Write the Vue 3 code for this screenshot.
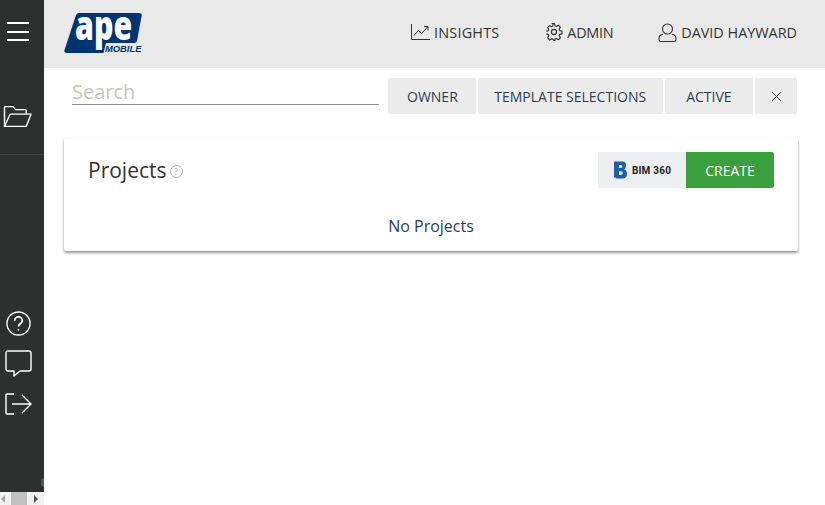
<script setup>
const filters = ["OWNER", "TEMPLATE SELECTIONS", "ACTIVE"];
</script>

<template>
  <div class="app">
    <aside class="rail">
      <div class="sidebar">
        <button class="burger" aria-label="Menu"><span></span><span></span><span></span></button>
        <div class="folder-row">
          <svg width="30" height="21" viewBox="3 2 29 21" fill="none" stroke="#fff" stroke-width="1.4" stroke-linejoin="round">
            <path d="M4 20.5V3.6q0-1 1-1h7.5l2.6 3h9.6q1 0 1 1v3" />
            <path d="M4 22.5 9.2 11q.4-.9 1.4-.9h20l-4.6 11.6q-.3.8-1.2.8H5q-1 0-1-1z" />
          </svg>
        </div>
        <div class="bottom-icons">
          <svg class="help" width="26" height="26" viewBox="0 0 26 26" fill="none" stroke="#fff" stroke-width="1.4">
            <circle cx="13" cy="13" r="12" />
            <path d="M9 10.2a4 4 0 0 1 8 0c0 2.7-4 3-4 6" stroke-width="1.8" />
            <circle cx="13" cy="19.5" r="1" fill="#fff" stroke="none" />
          </svg>
          <svg width="27" height="27" viewBox="0 0 27 27" fill="none" stroke="#fff" stroke-width="1.4" stroke-linejoin="round">
            <path d="M3 1h21q2 0 2 2v16q0 2-2 2H15l-6 5v-5H3q-2 0-2-2V3q0-2 2-2z" />
          </svg>
          <svg class="exit" width="27" height="22" viewBox="0 0 27 22" fill="none" stroke="#fff" stroke-width="1.4" stroke-linejoin="round">
            <path d="M9 1H2q-1 0-1 1v18q0 1 1 1h7" />
            <path d="M7 11h19M17 2l9 9-9 9" />
          </svg>
        </div>
        <span class="stray"></span>
      </div>
      <div class="scrollbar">
        <i class="arrow left"></i>
        <i class="thumb"></i>
        <i class="arrow right"></i>
      </div>
    </aside>

    <div class="main">
      <header class="topbar">
        <svg class="logo" width="78" height="40" viewBox="0 0 78 40">
          <path fill="#003473" d="M15.500 0H75q3.500 0 2.500 3.500L73 28q-.5 2-2.500 2H42L39.500 40H3q-3.500 0-2.500-3L12 2q.8-2 3.500-2z" />
          <text class="logo-ape" transform="translate(11 27) scale(.74 1)">ape</text>
          <text class="logo-mobile" x="41" y="39">MOBILE</text>
        </svg>
        <nav class="nav">
          <a class="nav-link insights">
            <svg width="19" height="16" viewBox="0 0 19 16" fill="none" stroke="#333" stroke-width="1">
              <path d="M.5 0v15.500H19" />
              <path d="M3 11.500 7.500 6.500l3 3L16.500 3" />
              <path d="M13 2.500h4v4" />
            </svg>
            INSIGHTS
          </a>
          <a class="nav-link admin">
            <svg width="18" height="18" viewBox="0 0 24 24" fill="none" stroke="#333" stroke-width="1.6" stroke-linejoin="round">
              <circle cx="12" cy="12" r="3.400" />
              <path d="M10 1.500h4l.7 3.200 1.900.8 2.800-1.800 2.800 2.900-1.700 2.700.8 2 3.200.6v4l-3.200.7-.8 1.900 1.800 2.800-2.900 2.800-2.800-1.800-1.900.8-.7 3.200" transform="translate(-.6 -.6) scale(.95)" />
              <path d="M10 1.500l-.7 3.200-1.900.8-2.800-1.800-2.800 2.900 1.700 2.700-.8 2-3.200.6" transform="translate(1.900 .1) scale(.9)" />
              <path d="M1.700 14.500l2.600.7.8 1.900-1.600 2.800 2.800 2.800 2.800-1.800 1.900.8.7 1.800h2" />
            </svg>
            ADMIN
          </a>
          <a class="nav-link user">
            <svg width="19" height="19" viewBox="0 0 19 19" fill="none" stroke="#333" stroke-width="1.100">
              <circle cx="9.500" cy="6" r="5" />
              <path d="M5 11.200C2.500 11.600 1 13.500 1 15.500v1q0 2 2 2h13q2 0 2-2v-1c0-2-1.500-3.900-4-4.300" />
            </svg>
            DAVID HAYWARD
          </a>
        </nav>
      </header>

      <section class="content">
        <div class="toolbar">
          <input class="search" type="text" placeholder="Search" />
          <div class="filters">
            <button v-for="f in filters" :key="f" class="filter">{{ f }}</button>
            <button class="filter clear" aria-label="Clear">
              <svg width="11" height="11" viewBox="0 0 10 10" stroke="#333" stroke-width="0.9"><path d="M1 1l8 8M9 1l-8 8" /></svg>
            </button>
          </div>
        </div>

        <div class="card">
          <div class="card-head">
            <h1 class="title">Projects</h1>
            <span class="hint">?</span>
            <div class="actions">
              <button class="bim">
                <svg width="13" height="18" viewBox="0 0 13 17">
                  <path fill="#1d5fa8" fill-rule="evenodd" d="M0 0h8.500Q12 0 12 3.800q0 2.800-1.800 4Q13 9 13 12.200 13 17 8.500 17H2.500L0 15.500zM5 3.500v3h2q1.300 0 1.300-1.500T7 3.500zM5 9.800v3.600h2.200q1.500 0 1.500-1.800T7.200 9.800z" />
                </svg>
                <span>BIM 360</span>
              </button>
              <button class="create">CREATE</button>
            </div>
          </div>
          <p class="empty">No Projects</p>
        </div>
      </section>
    </div>
  </div>
</template>

<style>
html,
body {
  margin: 0;
  overflow: hidden;
}
</style>

<style scoped>
.app {
  display: flex;
  width: 825px;
  height: 505px;
  font-family: "Open Sans", "Liberation Sans", sans-serif;
  color: #333;
  background: #fff;
}

button {
  border: 0;
  padding: 0;
  font: inherit;
  cursor: pointer;
}

.rail {
  display: flex;
  flex-direction: column;
  width: 44px;
  flex: none;
}

.sidebar {
  position: relative;
  flex: 1;
  display: flex;
  flex-direction: column;
  background: #2e3030;
}

.burger {
  display: flex;
  flex-direction: column;
  gap: 6.5px;
  margin: 22px 0 0 7px;
  background: none;
}

.burger span {
  display: block;
  width: 22px;
  height: 2px;
  background: #fff;
}

.folder-row {
  height: 114px;
  box-sizing: border-box;
  padding: 65px 0 0 3px;
  border-bottom: 1px solid #414343;
}

.bottom-icons {
  display: flex;
  flex-direction: column;
  align-items: flex-start;
  gap: 14px;
  margin: 156px 0 0 5px;
}

.exit {
  margin-top: 2px;
}

.help {
  margin-left: 1px;
  width: 25px;
  height: 25px;
}

.stray {
  position: absolute;
  left: 41px;
  bottom: 5px;
  width: 3px;
  height: 9px;
  border-radius: 3px 0 0 3px;
  background: #47597a;
}

.scrollbar {
  display: flex;
  align-items: center;
  height: 13px;
  padding-left: 1px;
  background: #f1f1f1;
}

.thumb {
  width: 16px;
  height: 13px;
  margin: 0 7px 0 6px;
  background: #c1c1c1;
}

.arrow {
  width: 0;
  height: 0;
  border-top: 4px solid transparent;
  border-bottom: 4px solid transparent;
}

.arrow.left {
  border-right: 4px solid #a3a3a3;
}

.arrow.right {
  border-left: 4px solid #505050;
}

.main {
  flex: 1;
  min-width: 0;
}

.topbar {
  display: flex;
  align-items: center;
  justify-content: space-between;
  height: 68px;
  padding: 0 28px 0 20px;
  background: #e9e9e9;
}

.logo {
  margin-bottom: 2px;
}

.logo-ape {
  font-family: "Open Sans", sans-serif;
  font-size: 41px;
  font-weight: 800;
  fill: #fff;
}

.logo-mobile {
  font-family: "Liberation Sans", sans-serif;
  font-size: 9.4px;
  font-style: italic;
  font-weight: 700;
  fill: #003473;
}

.nav {
  display: flex;
  align-items: center;
  margin-bottom: 4px;
  font-size: 14.4px;
}

.nav-link {
  display: flex;
  align-items: center;
  gap: 4px;
  white-space: nowrap;
}

.nav-link.insights {
  letter-spacing: 0.2px;
}

.nav-link.admin {
  margin-left: 46px;
  letter-spacing: -0.3px;
}

.nav-link.user {
  margin-left: 45px;
}

.content {
  padding: 10px 27px 0 20px;
}

.toolbar {
  display: flex;
  align-items: flex-start;
  padding-left: 8px;
}

.search {
  width: 307px;
  height: 27px;
  box-sizing: border-box;
  margin-right: 9px;
  padding: 1px 0 0;
  border: 0;
  border-bottom: 1px solid #8a8a8a;
  outline: 0;
  font-family: inherit;
  font-size: 20px;
  color: #333;
  background: transparent;
}

.search::placeholder {
  color: #c8c5b8;
  opacity: 1;
}

.filters {
  display: flex;
  gap: 2px;
}

.filter {
  height: 36px;
  padding: 0 16.5px;
  border-radius: 2px;
  background: #ececec;
  font-size: 14px;
  color: #2c3e50;
  white-space: nowrap;
}

.filter:first-child {
  padding: 0 18px 0 19px;
}

.filter:nth-child(3) {
  padding: 0 21.5px;
}

.filter.clear {
  display: flex;
  align-items: center;
  justify-content: center;
  width: 42px;
  padding: 0;
}

.card {
  width: 734px;
  height: 113px;
  margin-top: 24px;
  border-radius: 2px;
  background: #fff;
  box-shadow: 0 2px 3px rgba(0, 0, 0, 0.4), 0 0 2px rgba(0, 0, 0, 0.08);
}

.card-head {
  display: flex;
  align-items: center;
  height: 36px;
  padding: 14px 24px 0;
}

.title {
  margin: 0;
  font-size: 21px;
  font-weight: 400;
  color: #333;
}

.hint {
  display: flex;
  align-items: center;
  justify-content: center;
  width: 11px;
  height: 11px;
  margin: 2px 0 0 3px;
  border: 1px solid #b5b5b5;
  border-radius: 50%;
  font-size: 9px;
  line-height: 1;
  color: #b5b5b5;
}

.actions {
  display: flex;
  margin-left: auto;
}

.bim,
.create {
  display: flex;
  align-items: center;
  justify-content: center;
  width: 88px;
  height: 36px;
}

.bim {
  gap: 5px;
  padding-left: 1px;
  border-radius: 2px 0 0 2px;
  background: #eceeef;
  font-family: Roboto, sans-serif;
  font-size: 10px;
  font-weight: 700;
  letter-spacing: 0.2px;
  color: #222;
}

.create {
  border-radius: 0 2px 2px 0;
  background: #3c9f3f;
  font-size: 14px;
  color: #fff;
}

.empty {
  margin: 27px 0 0;
  text-align: center;
  font-size: 16px;
  line-height: 22px;
  color: #2c3e50;
}
</style>
